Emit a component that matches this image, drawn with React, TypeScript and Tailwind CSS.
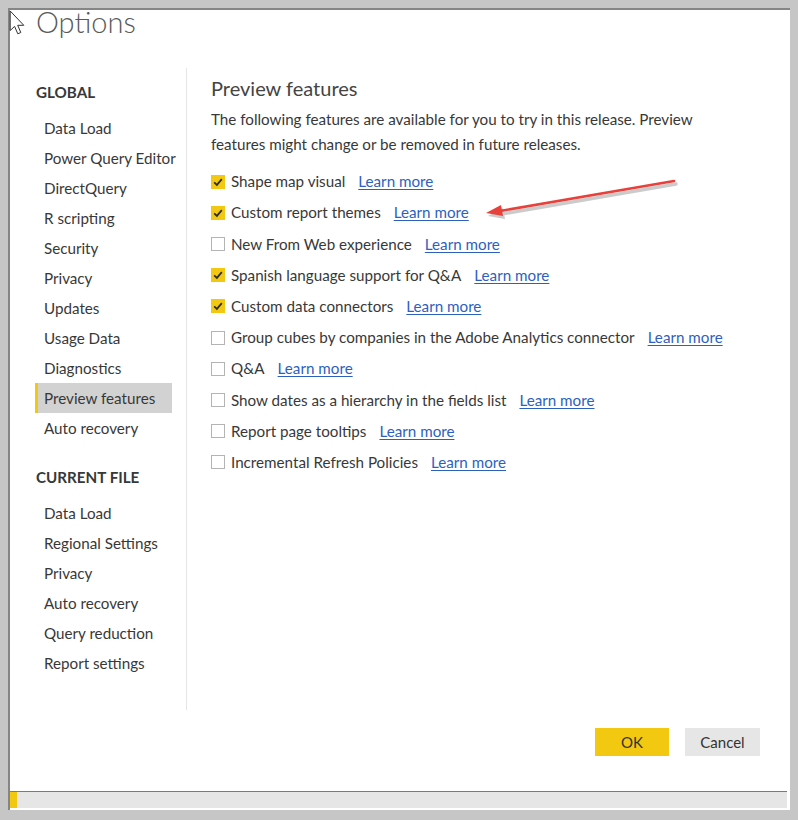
import React from 'react';

const globalItems = [
  'Data Load',
  'Power Query Editor',
  'DirectQuery',
  'R scripting',
  'Security',
  'Privacy',
  'Updates',
  'Usage Data',
  'Diagnostics',
  'Preview features',
  'Auto recovery',
];

const fileItems = [
  'Data Load',
  'Regional Settings',
  'Privacy',
  'Auto recovery',
  'Query reduction',
  'Report settings',
];

const features: [string, boolean][] = [
  ['Shape map visual', true],
  ['Custom report themes', true],
  ['New From Web experience', false],
  ['Spanish language support for Q&A', true],
  ['Custom data connectors', true],
  ['Group cubes by companies in the Adobe Analytics connector', false],
  ['Q&A', false],
  ['Show dates as a hierarchy in the fields list', false],
  ['Report page tooltips', false],
  ['Incremental Refresh Policies', false],
];

const Checkbox = ({ checked }: { checked: boolean }) =>
  checked ? (
    <span className="w-[14px] h-[14px] bg-[#f2c811] flex items-center justify-center shrink-0">
      <svg width="14" height="14" viewBox="0 0 14 14">
        <path d="M3.2 7.3 L5.9 9.9 L10.8 4.1" fill="none" stroke="#2b2b2b" strokeWidth="1.7" />
      </svg>
    </span>
  ) : (
    <span className="w-[14px] h-[14px] border border-[#b4b4b4] bg-white shrink-0" />
  );

const NavItem = ({ label, active }: { label: string; active?: boolean }) => (
  <div
    className={`h-[30px] w-[137px] flex items-center whitespace-nowrap text-[15.2px] text-[#383838] ${
      active ? 'bg-[#d2d2d2] border-l-[3px] border-[#f2c811] pl-[6px]' : 'pl-[9px]'
    }`}
  >
    {label}
  </div>
);

export default function App() {
  return (
    <div className="w-[798px] h-[820px] bg-[#c6c6c6] pt-[8px] pl-[8px] pr-[8px] pb-[10px] font-[Lato,sans-serif] overflow-hidden">
      <div className="relative h-full border-t-2 border-l-2 border-[#858585] bg-white flex flex-col pr-[3px] pb-[2px]">
        {/* mouse cursor */}
        <svg className="absolute left-[-1px] top-[0px]" width="18" height="26" viewBox="0 0 18 26">
          <path
            d="M1.2 1 L1.2 20.5 L5.6 16.4 L8.8 23.8 L11.8 22.5 L8.7 15.3 L14.8 15.3 Z"
            fill="white"
            stroke="#333"
            strokeWidth="1"
            strokeLinejoin="round"
          />
        </svg>

        {/* red arrow callout */}
        <svg className="absolute left-[468px] top-[160px]" width="212" height="52" viewBox="0 0 212 52">
          <g transform="translate(2,3)" opacity="0.3">
            <line x1="196" y1="11" x2="22" y2="41" stroke="#555" strokeWidth="3.4" strokeLinecap="round" />
            <path d="M8 43 L23 35 L25 46 Z" fill="#555" />
          </g>
          <line x1="196" y1="11" x2="22" y2="41" stroke="#e8403a" strokeWidth="2.6" strokeLinecap="round" />
          <path d="M8 43 L23 35 L25 46 Z" fill="#e8403a" />
        </svg>

        <div className="flex-1 flex flex-col">
          {/* Title */}
          <div className="h-[58px] pl-[26px]">
            <div className="text-[29px] leading-[24px] font-light text-[#5a5a5a]">Options</div>
          </div>

          <div className="h-[642px] flex">
            {/* Sidebar */}
            <div className="w-[177px] border-r border-[#e6e6e6] pt-[9px] pl-[25px]">
              <div className="h-[30px] flex items-center pl-[1px] text-[15.2px] font-bold text-[#383838]">GLOBAL</div>
              <div className="mt-[6px]">
                {globalItems.map((it) => (
                  <NavItem key={it} label={it} active={it === 'Preview features'} />
                ))}
              </div>
              <div className="h-[30px] mt-[19px] flex items-center pl-[1px] text-[15.2px] font-bold text-[#383838]">
                CURRENT FILE
              </div>
              <div className="mt-[6px]">
                {fileItems.map((it) => (
                  <NavItem key={it} label={it} />
                ))}
              </div>
            </div>

            {/* Content */}
            <div className="flex-1 pl-[24px] pt-[6px] text-[#383838]">
              <div className="h-[28px] flex items-center text-[20px] text-[#444]">Preview features</div>
              <div className="mt-[5px] text-[15.2px] leading-[25px] whitespace-nowrap">
                The following features are available for you to try in this release. Preview
                <br />
                features might change or be removed in future releases.
              </div>
              <div className="mt-[9px]">
                {features.map(([label, checked]) => (
                  <div key={label} className="h-[31.2px] flex items-center text-[15.2px] whitespace-nowrap">
                    <Checkbox checked={checked} />
                    <span className="ml-[6px]">{label}</span>
                    <span className="ml-[13px] text-[#2d5fc0] underline underline-offset-2">Learn more</span>
                  </div>
                ))}
              </div>
            </div>
          </div>

          {/* Buttons */}
          <div className="flex justify-end gap-[16px] pt-[18px] pr-[27px]">
            <button className="w-[74px] h-[28px] bg-[#f2c811] text-[15px] text-[#333]">OK</button>
            <button className="w-[75px] h-[28px] bg-[#e6e6e6] text-[15px] text-[#333]">Cancel</button>
          </div>
        </div>

        {/* Status bar */}
        <div className="h-[17px] border-t border-[#7a7a7a] bg-[#e6e6e6] flex">
          <div className="w-[7px] h-full bg-[#f2c811]" />
        </div>
      </div>
    </div>
  );
}
